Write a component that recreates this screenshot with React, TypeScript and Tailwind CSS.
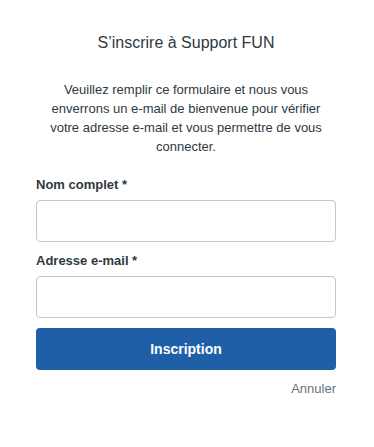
import React from "react";

export default function App() {
  return (
    <div className="w-[374px] h-[447px] bg-white" style={{ fontFamily: '"Liberation Sans", Arial, sans-serif' }}>
      <div className="pt-[32px] px-[36px] pr-[38px] flex flex-col">
        <h1 className="text-[16px] leading-[22px] text-center text-[#2f3941] font-normal">S’inscrire à Support FUN</h1>
        <p className="mt-[26px] text-[13px] leading-[19px] text-center text-[#2f3941]">
          Veuillez remplir ce formulaire et nous vous enverrons un e-mail de bienvenue pour vérifier votre adresse e-mail et vous permettre de vous connecter.
        </p>
        <label className="mt-[20px] text-[13px] leading-[18px] font-bold text-[#2f3941]">Nom complet *</label>
        <input type="text" className="mt-[6px] h-[42px] w-full rounded-[4px] border border-[#c2c8cc] bg-white outline-none" />
        <label className="mt-[10px] text-[13px] leading-[18px] font-bold text-[#2f3941]">Adresse e-mail *</label>
        <input type="email" className="mt-[6px] h-[42px] w-full rounded-[4px] border border-[#c2c8cc] bg-white outline-none" />
        <button className="mt-[10px] h-[42px] w-full rounded-[4px] bg-[#1f5fa8] text-white text-[14px] font-bold">Inscription</button>
        <div className="mt-[10px] text-right text-[13px] leading-[18px] text-[#68737d]">Annuler</div>
      </div>
    </div>
  );
}
